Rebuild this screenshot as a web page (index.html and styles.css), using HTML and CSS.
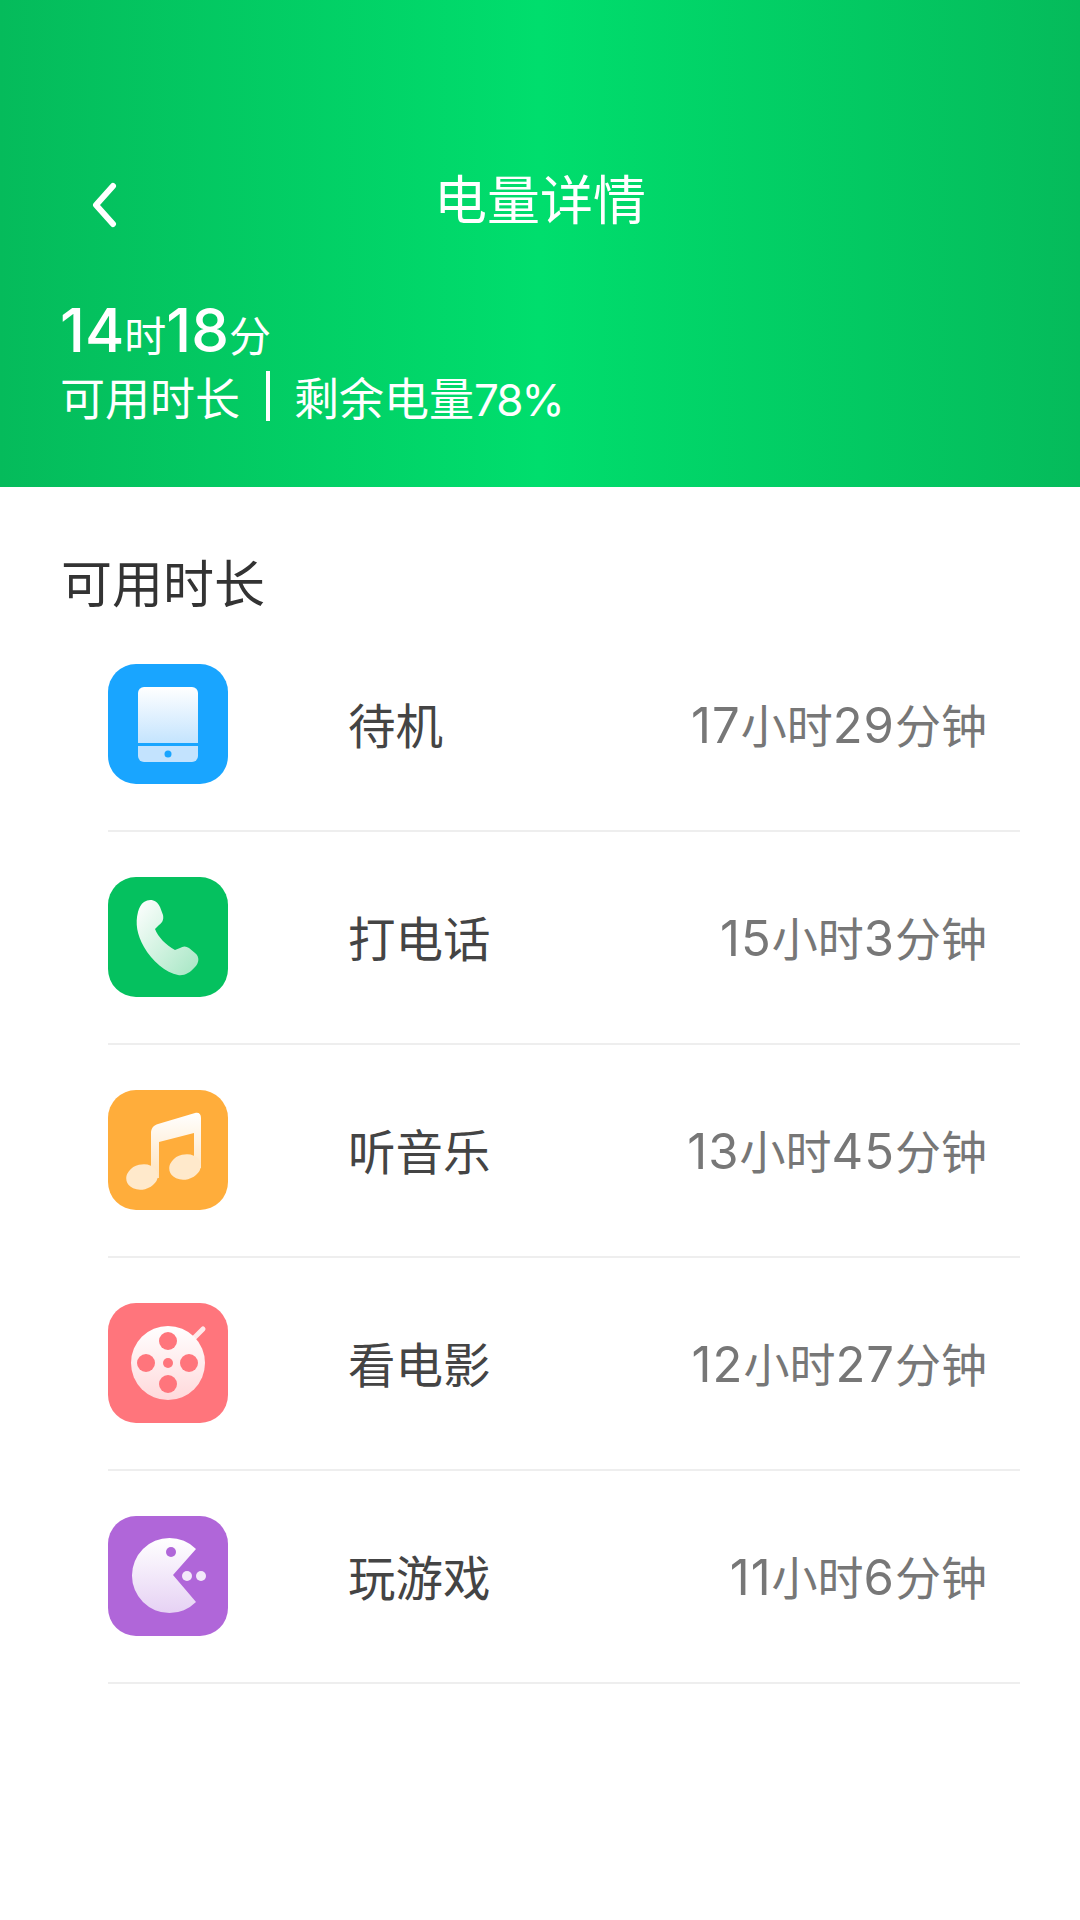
FILE: index.html
```html
<!DOCTYPE html>
<html lang="zh-CN">
<head>
    <meta charset="UTF-8">
    <meta name="viewport" content="width=device-width, initial-scale=1.0">
    <title>电量详情</title>
    <link rel="stylesheet" href="styles.css">
</head>
<body>
    <header class="top">
        <div class="title-bar">
            <svg class="back" viewBox="0 0 26 46" aria-hidden="true">
                <path d="M22 4 L5 23 L22 42" fill="none" stroke="#fff" stroke-width="6" stroke-linecap="round" stroke-linejoin="round"/>
            </svg>
            <h1>电量详情</h1>
        </div>
        <div class="remain"><b>14</b>时<b>18</b>分</div>
        <div class="remain-sub">
            <span>可用时长</span>
            <i class="bar"></i>
            <span>剩余电量<em>78%</em></span>
        </div>
    </header>

    <main>
        <h2>可用时长</h2>
        <ul class="list">
            <li class="row">
                <svg class="icon" viewBox="0 0 120 120" aria-hidden="true">
                    <defs>
                        <linearGradient id="g-blue" x1="0" y1="0" x2="0" y2="1">
                            <stop offset="0" stop-color="#fff"/>
                            <stop offset="1" stop-color="#c4e4fe"/>
                        </linearGradient>
                    </defs>
                    <rect width="120" height="120" rx="28" fill="#19a5ff"/>
                    <path d="M36 23 H84 A6 6 0 0 1 90 29 V79 H30 V29 A6 6 0 0 1 36 23 Z" fill="url(#g-blue)"/>
                    <path d="M30 82 H90 V92 A6 6 0 0 1 84 98 H36 A6 6 0 0 1 30 92 Z" fill="#c3e3fe"/>
                    <circle cx="60" cy="90" r="3.5" fill="#19a5ff"/>
                </svg>
                <span class="name">待机</span>
                <span class="time"><b>17</b>小时<b>29</b>分钟</span>
            </li>
            <li class="row">
                <svg class="icon" viewBox="0 0 120 120" aria-hidden="true">
                    <defs>
                        <linearGradient id="g-green" x1="0" y1="0" x2="1" y2="1">
                            <stop offset="0" stop-color="#fff"/>
                            <stop offset="1" stop-color="#a5e6c3"/>
                        </linearGradient>
                    </defs>
                    <rect width="120" height="120" rx="28" fill="#05c15f"/>
                    <path d="M36 25 C42 21 49 23 52 30 L55 38 C56 43 54 46 51 48 L47 52 C50 60 58 68 67 73 L72 71 C75 69 78 69 81 71 L87 76 C92 80 91 86 87 90 C82 96 76 99 70 98 C58 96 44 84 36 70 C29 58 27 46 30 35 C31 31 33 27 36 25 Z" fill="url(#g-green)"/>
                </svg>
                <span class="name">打电话</span>
                <span class="time"><b>15</b>小时<b>3</b>分钟</span>
            </li>
            <li class="row">
                <svg class="icon" viewBox="0 0 120 120" aria-hidden="true">
                    <defs>
                        <linearGradient id="g-orange" x1="0" y1="0" x2="0" y2="1">
                            <stop offset="0" stop-color="#fff"/>
                            <stop offset="1" stop-color="#ffe3bd"/>
                        </linearGradient>
                    </defs>
                    <rect width="120" height="120" rx="28" fill="#ffad3b"/>
                    <path d="M43 43 C43 38 46 35 50 34 L87 23 C91 22 93 24 93 28 V78 H86 V43 L51 52 V88 H43 Z" fill="url(#g-orange)"/>
                    <ellipse cx="34" cy="87" rx="16" ry="12.5" transform="rotate(-14 34 87)" fill="#ffe9cb"/>
                    <ellipse cx="77" cy="77" rx="16" ry="12.5" transform="rotate(-14 77 77)" fill="#ffe9cb"/>
                </svg>
                <span class="name">听音乐</span>
                <span class="time"><b>13</b>小时<b>45</b>分钟</span>
            </li>
            <li class="row">
                <svg class="icon" viewBox="0 0 120 120" aria-hidden="true">
                    <defs>
                        <linearGradient id="g-red" x1="0" y1="0" x2="0" y2="1">
                            <stop offset="0" stop-color="#fff"/>
                            <stop offset="1" stop-color="#ffd9db"/>
                        </linearGradient>
                    </defs>
                    <rect width="120" height="120" rx="28" fill="#ff757c"/>
                    <path d="M86 35 L95 26" stroke="#ffe9ea" stroke-width="5" stroke-linecap="round"/>
                    <circle cx="60" cy="60" r="37" fill="url(#g-red)"/>
                    <circle cx="60" cy="38" r="9" fill="#ff757c"/>
                    <circle cx="60" cy="81" r="9" fill="#ff757c"/>
                    <circle cx="38" cy="60" r="9" fill="#ff757c"/>
                    <circle cx="81" cy="60" r="9" fill="#ff757c"/>
                    <circle cx="60" cy="60" r="5" fill="#ff757c"/>
                </svg>
                <span class="name">看电影</span>
                <span class="time"><b>12</b>小时<b>27</b>分钟</span>
            </li>
            <li class="row">
                <svg class="icon" viewBox="0 0 120 120" aria-hidden="true">
                    <defs>
                        <linearGradient id="g-purple" x1="0" y1="0" x2="0" y2="1">
                            <stop offset="0" stop-color="#fff"/>
                            <stop offset="1" stop-color="#e6d2f4"/>
                        </linearGradient>
                    </defs>
                    <rect width="120" height="120" rx="28" fill="#b066d9"/>
                    <path d="M88 33 A37.5 37.5 0 1 0 88 86 L65 59 Z" fill="url(#g-purple)"/>
                    <circle cx="63" cy="36" r="5" fill="#b066d9"/>
                    <circle cx="79" cy="60" r="5" fill="#f3e8fa"/>
                    <circle cx="93" cy="60" r="5" fill="#f3e8fa"/>
                </svg>
                <span class="name">玩游戏</span>
                <span class="time"><b>11</b>小时<b>6</b>分钟</span>
            </li>
        </ul>
    </main>
</body>
</html>
```

FILE: styles.css
```css
* {
    margin: 0;
    padding: 0;
    box-sizing: border-box;
}

body {
    font-family: Inter, 'Noto Sans CJK SC', sans-serif;
    background: #fff;
    color: #333;
    min-height: 1920px;
    overflow-x: hidden;
}

.top {
    height: 487px;
    padding: 165px 60px 0;
    color: #fff;
    background: linear-gradient(90deg, #05bb5b, #00de6d 50%, #05bb5b);
}

.title-bar {
    position: relative;
    height: 72px;
    text-align: center;
}

.title-bar h1 {
    font-size: 53px;
    font-weight: 400;
    line-height: 72px;
}

.back {
    position: absolute;
    left: 31px;
    top: 17px;
    width: 26px;
    height: 46px;
}

.remain {
    margin-top: 53px;
    font-size: 42px;
    line-height: 80px;
    height: 80px;
}

.remain b {
    font-size: 60px;
    font-weight: 500;
}

.remain-sub {
    display: flex;
    align-items: center;
    height: 52px;
    font-size: 45px;
}

.remain-sub em {
    font-style: normal;
    font-size: 44px;
    letter-spacing: -2px;
}

.bar {
    width: 4px;
    height: 50px;
    margin: 0 24px 0 26px;
    background: #fff;
}

main h2 {
    height: 70px;
    margin: 63px 0 0 61px;
    font-size: 51px;
    font-weight: 400;
    line-height: 70px;
    color: #333;
}

.list {
    list-style: none;
    margin-left: 108px;
    width: 912px;
    margin-top: -1px;
}

.row {
    display: flex;
    align-items: center;
    padding: 45px 33px 46px 0;
    border-bottom: 2px solid #eee;
}

.icon {
    width: 120px;
    height: 120px;
    flex-shrink: 0;
}

.name {
    margin-left: 120px;
    margin-bottom: 2px;
    font-size: 47.5px;
    color: #444;
}

.time {
    margin-left: auto;
    margin-bottom: 2px;
    font-size: 46px;
    color: #777;
}

.time b {
    font-size: 49px;
    font-weight: 400;
    letter-spacing: 1px;
}
```
